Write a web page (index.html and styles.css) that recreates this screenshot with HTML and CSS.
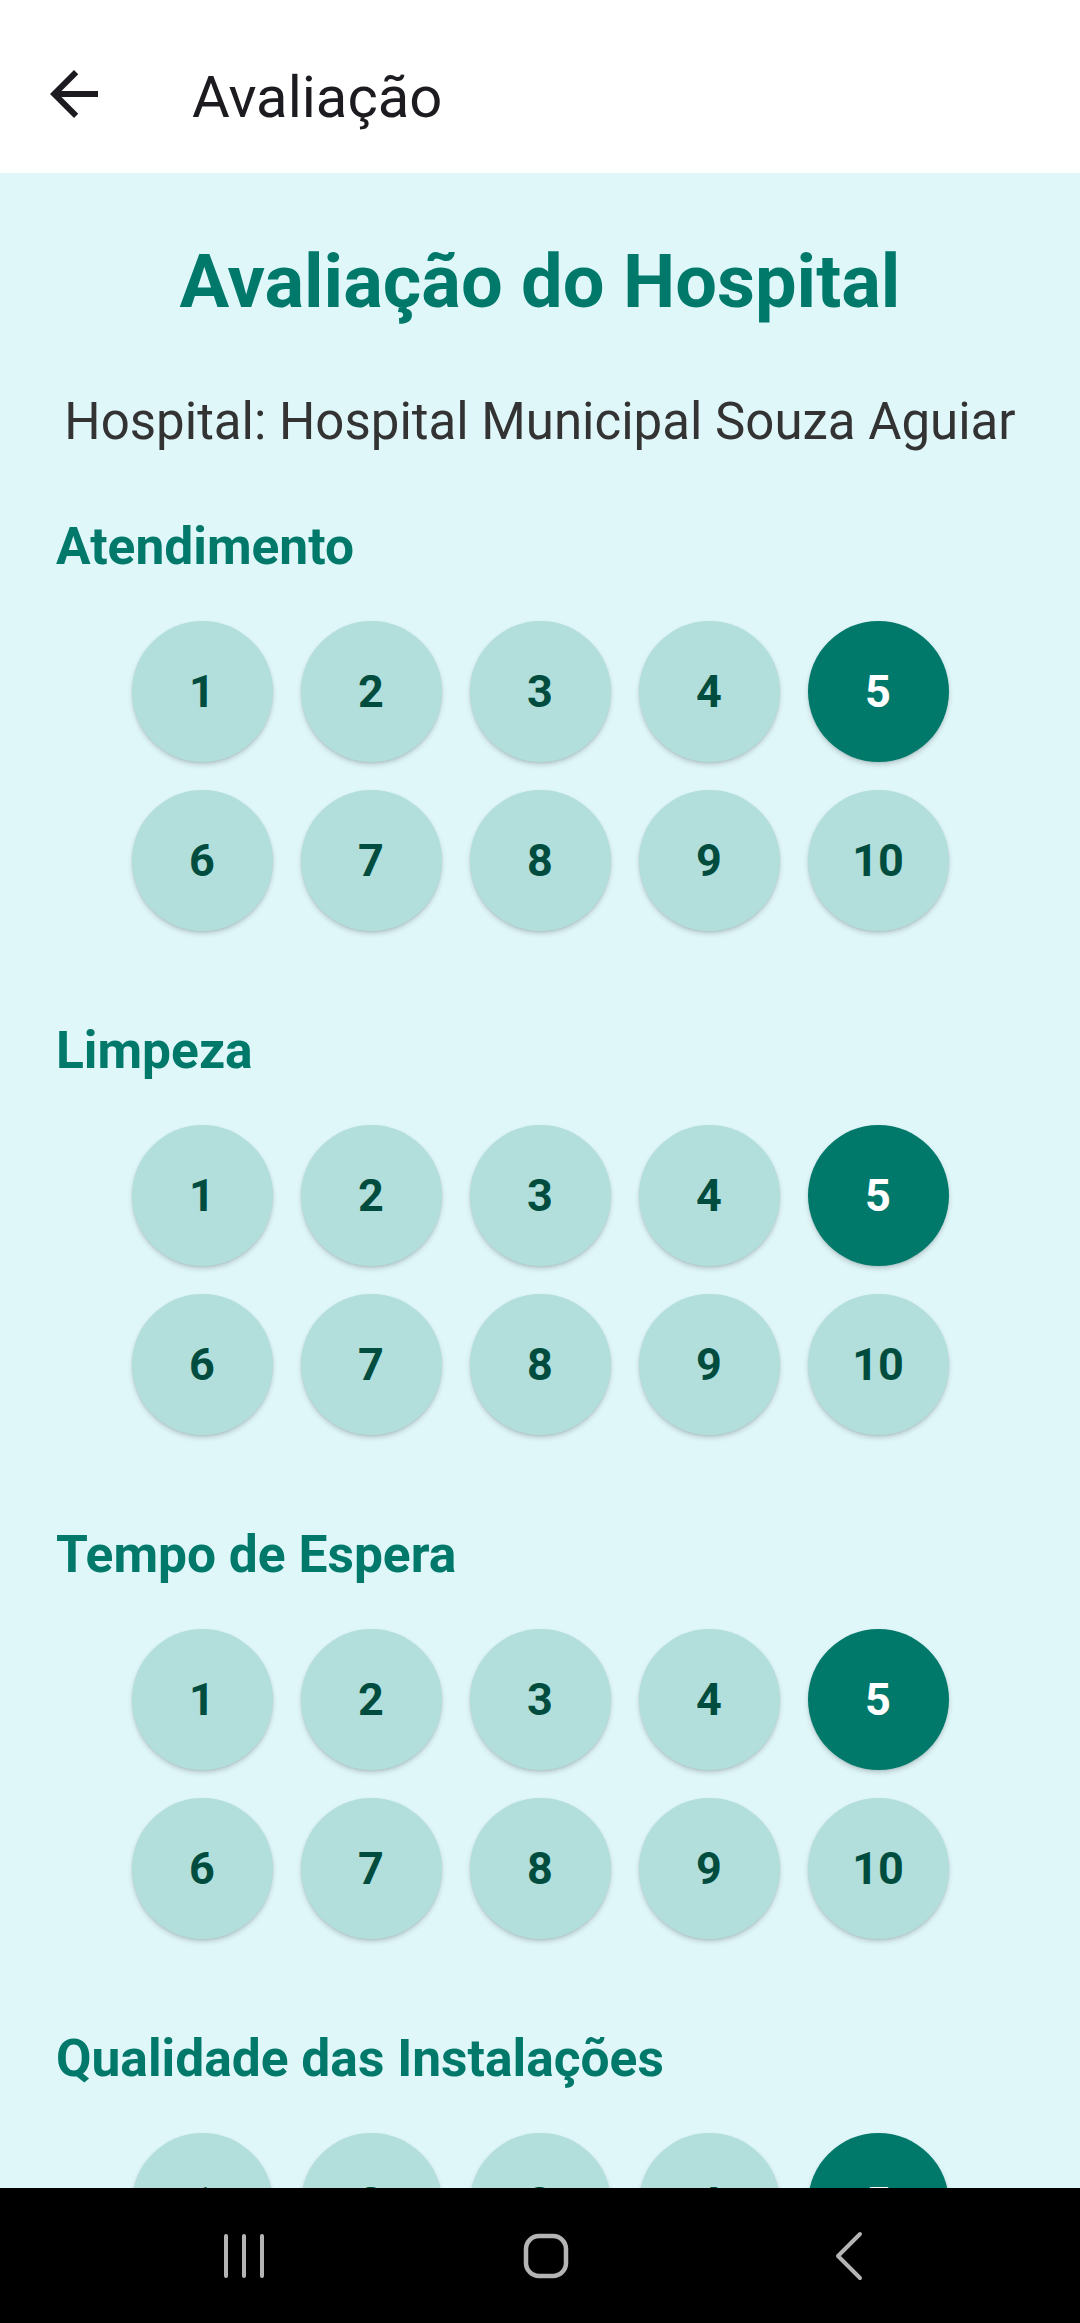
FILE: index.html
```html
<!DOCTYPE html>
<html lang="pt-BR">
<head>
<meta charset="utf-8">
<title>Avaliação</title>
<link rel="stylesheet" href="styles.css">
</head>
<body>
<div class="screen">
  <header class="appbar">
    <svg class="back-icon" viewBox="0 0 24 24" aria-hidden="true"><path d="M20 11H7.83l5.59-5.59L12 4l-8 8 8 8 1.41-1.41L7.83 13H20v-2z"/></svg>
    <h1 class="appbar-title">Avaliação</h1>
  </header>

  <main class="content">
    <h2 class="page-title">Avaliação do Hospital</h2>
    <p class="hospital">Hospital: Hospital Municipal Souza Aguiar</p>

    <div class="criteria">
      <section class="criterion">
        <h3 class="criterion-label">Atendimento</h3>
        <div class="scale">
          <button class="rate">1</button><button class="rate">2</button><button class="rate">3</button><button class="rate">4</button><button class="rate selected">5</button>
          <button class="rate">6</button><button class="rate">7</button><button class="rate">8</button><button class="rate">9</button><button class="rate">10</button>
        </div>
      </section>

      <section class="criterion">
        <h3 class="criterion-label">Limpeza</h3>
        <div class="scale">
          <button class="rate">1</button><button class="rate">2</button><button class="rate">3</button><button class="rate">4</button><button class="rate selected">5</button>
          <button class="rate">6</button><button class="rate">7</button><button class="rate">8</button><button class="rate">9</button><button class="rate">10</button>
        </div>
      </section>

      <section class="criterion">
        <h3 class="criterion-label">Tempo de Espera</h3>
        <div class="scale">
          <button class="rate">1</button><button class="rate">2</button><button class="rate">3</button><button class="rate">4</button><button class="rate selected">5</button>
          <button class="rate">6</button><button class="rate">7</button><button class="rate">8</button><button class="rate">9</button><button class="rate">10</button>
        </div>
      </section>

      <section class="criterion">
        <h3 class="criterion-label">Qualidade das Instalações</h3>
        <div class="scale">
          <button class="rate">1</button><button class="rate">2</button><button class="rate">3</button><button class="rate">4</button><button class="rate selected">5</button>
          <button class="rate">6</button><button class="rate">7</button><button class="rate">8</button><button class="rate">9</button><button class="rate">10</button>
        </div>
      </section>
    </div>
  </main>

  <nav class="sysnav">
    <svg class="nav-recents" viewBox="0 0 44 44" aria-hidden="true">
      <line x1="4" y1="2" x2="4" y2="42"/><line x1="22" y1="2" x2="22" y2="42"/><line x1="40" y1="2" x2="40" y2="42"/>
    </svg>
    <svg class="nav-home" viewBox="0 0 46 46" aria-hidden="true">
      <rect x="3" y="3" width="40" height="40" rx="13" ry="13"/>
    </svg>
    <svg class="nav-back" viewBox="0 0 30 50" aria-hidden="true">
      <polyline points="26,3 4,25 26,47"/>
    </svg>
  </nav>
</div>
</body>
</html>
```

FILE: styles.css
```css
* {
  box-sizing: border-box;
}

html, body {
  margin: 0;
  padding: 0;
  background: #e0f7fa;
}

.screen {
  width: 1080px;
  height: 2323px;
  display: flex;
  flex-direction: column;
  overflow: hidden;
  font-family: Roboto, "Noto Sans", "Liberation Sans", sans-serif;
}

/* App bar */
.appbar {
  flex: none;
  height: 173px;
  background: #ffffff;
  display: flex;
  align-items: flex-start;
  padding-top: 58px;
}

.back-icon {
  width: 72px;
  height: 72px;
  margin-left: 38px;
  fill: #1d1b20;
  flex: none;
}

.appbar-title {
  margin: 3px 0 0 82px;
  font-weight: 400;
  font-size: 58px;
  line-height: 72px;
  color: #1d1b20;
}

/* Content */
.content {
  flex: 1;
  min-height: 0;
  overflow: hidden;
  background: #e0f7fa;
  padding-top: 65px;
}

.page-title {
  margin: 0;
  text-align: center;
  font-weight: 700;
  font-size: 74px;
  line-height: 1.2;
  color: #00796b;
}

.hospital {
  margin: 64px 0 0;
  text-align: center;
  font-weight: 400;
  font-size: 51px;
  line-height: 1.2;
  color: #333333;
}

.criteria {
  margin-top: 65px;
}

.criterion {
  padding: 0 54px 0 56px;
  margin-bottom: 90px;
}

.criterion-label {
  margin: 0 0 44px;
  font-weight: 700;
  font-size: 51.5px;
  line-height: 60px;
  color: #00796b;
}

.scale {
  display: grid;
  grid-template-columns: repeat(5, 141px);
  grid-auto-rows: 141px;
  gap: 28px;
  justify-content: center;
  margin-left: -2px;
}

.rate {
  width: 141px;
  height: 141px;
  padding: 0;
  border: none;
  border-radius: 50%;
  background: #b2dfdb;
  color: #004d40;
  font-family: Roboto, "Noto Sans", "Liberation Sans", sans-serif;
  font-weight: 700;
  font-size: 45px;
  line-height: 1;
  display: flex;
  align-items: center;
  justify-content: center;
  box-shadow: 0 3px 5px rgba(0, 0, 0, 0.16), 0 1px 2px rgba(0, 0, 0, 0.08);
}

.rate.selected {
  background: #00796b;
  color: #ffffff;
}

/* System navigation bar */
.sysnav {
  flex: none;
  height: 135px;
  background: #000000;
  display: flex;
  align-items: center;
}

.sysnav svg {
  fill: none;
  stroke: #b4b4b4;
  stroke-linecap: round;
  stroke-linejoin: round;
  flex: none;
}

.nav-recents {
  width: 44px;
  height: 44px;
  margin-left: 222px;
  stroke-width: 4;
}

.nav-home {
  width: 46px;
  height: 46px;
  margin-left: 257px;
  stroke-width: 4.5;
}

.nav-back {
  width: 30px;
  height: 50px;
  margin-left: 265px;
  stroke-width: 4;
}
```
